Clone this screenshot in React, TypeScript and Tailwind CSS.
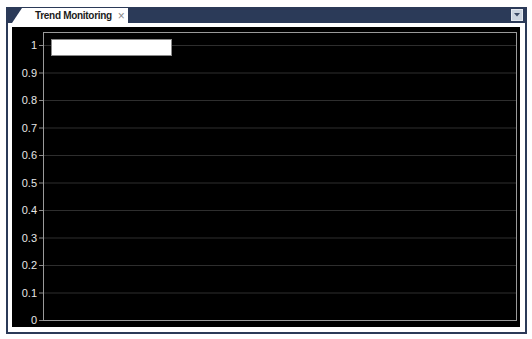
import React from 'react';

const ticks = [1, 0.9, 0.8, 0.7, 0.6, 0.5, 0.4, 0.3, 0.2, 0.1, 0];

function TrendChart() {
  // plot area inside the black panel
  const left = 31;
  const right = 504;
  const top = 5;
  const bottom = 293;
  const yOf = (v: number) => 18 + (1 - v) * 275;

  return (
    <svg width="508" height="300" className="block">
      {ticks.map((v) => (
        <g key={v}>
          {v !== 0 && (
            <line x1={left} x2={right} y1={yOf(v) + 0.5} y2={yOf(v) + 0.5} stroke="#2e2e2e" />
          )}
          <line x1={27} x2={left} y1={yOf(v) + 0.5} y2={yOf(v) + 0.5} stroke="#8a8a8a" />
          <text
            x={25}
            y={yOf(v) + 4}
            textAnchor="end"
            fill="#e6e6e6"
            fontSize="11"
            fontFamily="'Liberation Sans', Arial, sans-serif"
          >
            {v}
          </text>
        </g>
      ))}
      <rect
        x={left + 0.5}
        y={top + 0.5}
        width={right - left}
        height={bottom - top}
        fill="none"
        stroke="#9a9a9a"
      />
      {/* legend */}
      <rect x={39.5} y={12.5} width={120} height={16} fill="#ffffff" stroke="#8a8a8a" />
    </svg>
  );
}

export default function App() {
  return (
    <div className="w-[532px] h-[339px] bg-white pt-[7px] pl-[6px] font-['Liberation_Sans',Arial,sans-serif]">
      <div className="w-[521px]">
        {/* tab strip */}
        <div className="h-[16px] bg-[#2b3a58] flex items-end">
          <div className="w-[6px] shrink-0" />
          <svg width="10" height="15" className="block shrink-0">
            <polygon points="0,15 10,0 10,15" fill="#ffffff" />
          </svg>
          <div className="h-[15px] w-[106px] shrink-0 bg-white flex items-center pl-[13px] text-[10px] leading-none whitespace-nowrap">
            <span className="font-bold text-[#1b1b1b] tracking-[-0.3px]">Trend Monitoring</span>
            <span className="ml-[6px] text-[#8a8a8a] text-[12px]">×</span>
          </div>
          <div className="flex-1" />
          <div className="mb-[2px] mr-[4px] w-[12px] h-[12px] shrink-0 bg-[#ccd4df] border border-[#e4e9f0] flex items-center justify-center">
            <svg width="6" height="4">
              <polygon points="0,0 6,0 3,3.5" fill="#3b4a66" />
            </svg>
          </div>
        </div>
        {/* body */}
        <div className="bg-white border-x-2 border-b-2 border-[#2b3a58] pt-[4px] pl-[4px] pr-[5px] pb-[5px]">
          <div className="bg-black w-[508px] h-[300px]">
            <TrendChart />
          </div>
        </div>
      </div>
    </div>
  );
}
